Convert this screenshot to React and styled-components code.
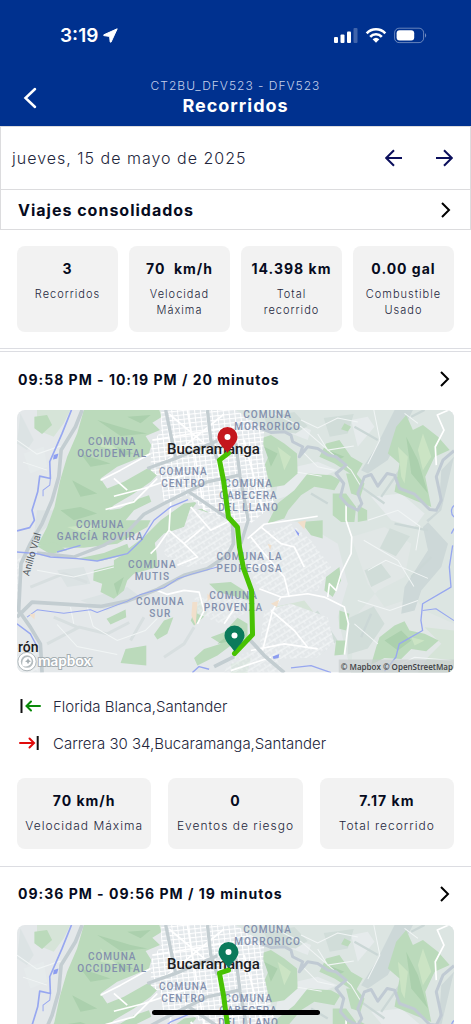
import React from "react";
import styled, { createGlobalStyle } from "styled-components";

const summary = [
  { value: "3", label: "Recorridos" },
  { value: "70\u00a0 km/h", label: "Velocidad Máxima" },
  { value: "14.398 km", label: "Total recorrido" },
  { value: "0.00 gal", label: "Combustible Usado" },
];

const trips = [
  {
    id: 1,
    title: "09:58 PM - 10:19 PM / 20 minutos",
    route: "M211 43 L202 50 L206 70 L211 107 L220 117 L222 137 L226 158 L234 180 L235 224 L217 243",
    pins: [
      { x: 210, y: 43, color: "#c4161c" },
      { x: 217, y: 241, color: "#0b7a5b" },
    ],
    from: "Florida Blanca,Santander",
    to: "Carrera 30 34,Bucaramanga,Santander",
    stats: [
      { value: "70 km/h", label: "Velocidad Máxima" },
      { value: "0", label: "Eventos de riesgo" },
      { value: "7.17 km", label: "Total recorrido" },
    ],
  },
  {
    id: 2,
    title: "09:36 PM - 09:56 PM / 19 minutos",
    route: "M211 45 L202 48 L206 70 L211 107 L220 117 L222 137 L226 158 L234 180 L235 224 L217 243",
    pins: [{ x: 211, y: 43, color: "#0b7a5b" }],
  },
];

const areas = [
  { x: 95, y: 35, lines: ["COMUNA", "OCCIDENTAL"] },
  { x: 250, y: 8, lines: ["COMUNA", "MORRORICO"] },
  { x: 166, y: 65, lines: ["COMUNA", "CENTRO"] },
  { x: 231, y: 77, lines: ["COMUNA", "CABECERA", "DEL LLANO"] },
  { x: 83, y: 118, lines: ["COMUNA", "GARCÍA ROVIRA"] },
  { x: 135, y: 158, lines: ["COMUNA", "MUTIS"] },
  { x: 232, y: 150, lines: ["COMUNA LA", "PEDREGOSA"] },
  { x: 143, y: 195, lines: ["COMUNA", "SUR"] },
  { x: 216, y: 189, lines: ["COMUNA", "PROVENZA"] },
];

function StatusIcons() {
  return (
    <svg width="94" height="18" viewBox="0 0 94 18" fill="#fff" aria-hidden="true">
      <rect x="0" y="11" width="4" height="6" rx="1" />
      <rect x="6.500" y="8.500" width="4" height="8.500" rx="1" />
      <rect x="13" y="5.500" width="4" height="11.500" rx="1" />
      <rect x="19.500" y="2" width="4" height="15" rx="1" opacity="0.25" />
      <g fill="none" stroke="#fff" strokeWidth="2.600">
        <path d="M32.700 7.300 A12.700 12.700 0 0 1 51.300 7.300" />
        <path d="M36.200 10.900 A7.800 7.800 0 0 1 47.800 10.900" />
      </g>
      <path d="M38.600 13.300 A5 5 0 0 1 45.400 13.300 L42 16.700 Z" />
      <rect x="60.600" y="2.200" width="29" height="14.400" rx="4.500" fill="none" stroke="#fff" opacity="0.4" />
      <rect x="62.600" y="4.200" width="17.600" height="10.400" rx="3" />
      <path d="M91 7 Q93.400 9.400 91 11.800 Z" opacity="0.45" />
    </svg>
  );
}

function Chevron() {
  return (
    <svg width="12" height="18" viewBox="0 0 12 18" fill="none" stroke="#000" strokeWidth="2" aria-hidden="true">
      <path d="M2 2 L9 9 L2 16" />
    </svg>
  );
}

function DayArrow({ next }) {
  return (
    <svg width="17" height="18" viewBox="0 0 17 18" fill="none" stroke="#0b0f5c" strokeWidth="2" aria-hidden="true">
      <path d={next ? "M0 9 H15.500 M8 1.200 L15.800 9 L8 16.800" : "M17 9 H1.500 M9 1.200 L1.200 9 L9 16.800"} />
    </svg>
  );
}

function StopIcon({ end }) {
  return (
    <svg width="22" height="16" viewBox="0 0 22 16" fill="none" strokeWidth="2" strokeLinecap="round" aria-hidden="true">
      {end ? (
        <>
          <path d="M1 8 H14 M10.500 3.500 L15 8 L10.500 12.500" stroke="#e00b0b" />
          <path d="M18.700 1 V15" stroke="#111" strokeLinecap="butt" />
        </>
      ) : (
        <>
          <path d="M2.500 1 V15" stroke="#111" strokeLinecap="butt" />
          <path d="M21 8 H8 M12 3.500 L7.500 8 L12 12.500" stroke="#0a8a0a" />
        </>
      )}
    </svg>
  );
}

function Terrain({ id }) {
  const grid = `grid-${id}`;
  const fine = `fine-${id}`;
  return (
    <svg width="436" height="262" viewBox="0 0 1308 786" preserveAspectRatio="none">
      <defs>
        <pattern id={grid} width="17" height="13" patternUnits="userSpaceOnUse" patternTransform="rotate(-6)">
          <rect width="17" height="13" fill="#e3e8eb" />
          <path d="M0 0 H17 M0 0 V13" stroke="#fff" strokeWidth="6" />
        </pattern>
        <pattern id={fine} width="26" height="19" patternUnits="userSpaceOnUse" patternTransform="rotate(-32)">
          <rect width="26" height="19" fill="#e4e8ea" />
          <path d="M0 3 H26 M3 0 V12 M17 10 V19" stroke="#f3f6f7" strokeWidth="3" />
        </pattern>
      </defs>
      <rect width="1308" height="786" fill="#e4e8ea" />

      {/* hills */}
      <path d="M655 0 H1308 V786 H1000 L960 620 990 520 960 400 860 340 760 320 720 180 Z" fill="#dce5e2" />
      <path d="M1000 380 L1100 350 1180 400 1160 500 1080 540 1010 620 1000 786 H1308 V640 L1220 600 1190 560 1100 590 1050 520 Z" fill="#e1e7e6" />
      <path d="M1130 0 L1185 0 1150 70 1110 150 1050 190 1030 180 1075 110 Z M1308 140 L1270 180 1262 300 1225 330 1290 400 1270 470 1210 540 1190 600 1150 610 1160 530 1230 420 1215 350 1270 300 Z" fill="#cdd8d8" />
      <path d="M790 180 L900 155 960 180 900 205 830 250 770 270 Z M1060 260 L1150 250 1220 310 1190 350 1120 330 Z M1000 30 L1050 20 1070 50 1020 110 Z M830 40 L880 60 870 90 820 70 Z M20 130 L80 110 90 170 40 190 Z" fill="#e6ebec" />
      <path d="M740 24 L830 6 870 48 834 70 756 60 Z M918 24 L1008 12 990 70 936 80 Z M990 624 L1068 588 1100 640 1050 714 990 732 Z M1116 354 L1176 378 1134 438 1086 414 Z M1040 480 L1090 460 1120 500 1060 530 Z M850 640 L900 600 960 690 900 740 Z" fill="#d1ddd9" />
      <path d="M1220 650 L1308 660 V786 H1200 L1230 740 1270 700 Z M770 590 L860 570 900 620 830 650 Z M60 0 L160 0 140 40 110 80 60 60 Z M420 0 L440 0 440 30 Z" fill="#d6e4d8" />
      <path d="M10 10 L50 90 30 120 0 100 Z M60 300 L110 300 90 350 50 380 Z M190 570 L330 530 370 560 270 600 Z M120 480 L200 470 220 520 150 530 Z" fill="#dce3e4" />
      <g fill="none" stroke="#d8dfe0" strokeWidth="9">
        <path d="M40 530 L140 490 210 516 M240 500 L310 470 M90 700 L186 650 270 670 336 636 M110 620 L180 650 M440 740 L500 700 530 650 M380 620 L340 690" />
      </g>
      <g fill="none" stroke="#cbd7d6" strokeWidth="7">
        <path d="M1160 160 L1090 260 M1030 230 L1100 280 M1180 20 L1220 0 M1130 340 L1230 360 M1240 440 L1180 500 M1060 610 L1030 680 M880 250 L930 280 M1010 50 L1080 90" />
      </g>

      {/* woods */}
      <g fill="#bbdabb">
        <path d="M200 0 L425 0 434 20 405 38 428 60 385 78 402 105 395 130 350 150 300 170 250 205 270 235 320 215 390 175 432 182 400 215 350 250 290 285 275 300 310 295 350 270 395 255 402 275 350 300 325 330 400 330 390 350 300 400 200 412 110 412 62 405 90 350 112 290 128 215 150 140 180 70 Z" />
        <path d="M52 20 L90 15 105 45 75 72 52 55 Z" />
        <path d="M320 425 L380 380 430 330 500 280 540 275 520 300 560 295 600 270 560 320 500 350 440 370 410 400 350 435 Z" />
        <path d="M230 480 L290 465 290 450 370 400 412 395 418 430 420 470 350 490 330 510 320 540 290 565 250 545 255 520 228 510 Z" />
        <path d="M730 85 L760 75 800 100 838 130 840 190 800 225 760 232 735 180 752 140 Z" />
        <path d="M925 100 L965 90 1000 140 1035 160 1012 200 950 160 905 140 Z M980 40 L1000 50 990 64 970 58 Z" />
        <path d="M1135 50 L1165 15 1185 60 1215 45 1260 80 1295 120 1250 140 1222 200 1240 290 1190 270 1130 245 1145 160 1110 130 Z" />
        <path d="M750 340 L780 280 830 240 870 190 940 195 968 210 950 240 890 230 850 255 812 300 800 325 Z" />
        <path d="M945 250 H985 L1015 290 1010 335 970 335 945 315 Z M985 190 L1015 190 1040 220 1028 260 1000 250 Z M850 335 L915 330 915 385 880 375 Z M1020 285 L1048 300 1048 330 1020 335 Z" />
        <path d="M530 742 L560 715 610 700 580 680 620 665 660 622 690 640 690 680 640 705 600 735 540 765 Z" />
        <path d="M575 520 L640 515 680 540 708 575 660 560 600 545 Z M520 630 L550 560 570 610 530 645 Z M800 450 L815 480 795 545 785 530 800 490 Z M725 450 L740 490 730 520 718 500 Z" />
        <path d="M965 600 L995 610 985 660 965 655 Z M955 690 L985 690 980 732 950 735 Z M925 500 L965 470 970 510 945 560 920 540 Z" />
        <path d="M1085 680 L1130 645 1160 632 1175 660 1220 670 1262 690 1225 722 1180 715 1150 745 1100 742 1060 762 1075 710 Z" />
        <path d="M268 625 L325 597 327 620 280 642 Z M325 715 L387 705 387 765 310 757 Z M410 672 L440 630 468 620 450 670 420 687 Z" />
        <path d="M60 408 L110 395 150 420 100 432 Z M180 445 L260 428 330 400 340 430 250 452 Z M640 760 L700 740 690 786 640 786 Z" />
      </g>
      <g fill="#abd0ad">
        <path d="M240 30 L340 60 390 70 310 78 Z M190 130 L280 160 220 170 Z M165 210 L240 250 190 260 Z M130 300 L190 290 240 310 170 330 Z M300 110 L350 130 310 140 Z M330 20 L400 15 370 40 Z" />
        <path d="M1165 80 L1200 150 1230 250 1180 190 Z M290 520 L320 500 300 555 Z M1100 690 L1150 660 1180 690 1140 720 Z M740 110 L780 130 760 170 Z M930 120 L980 140 960 150 Z M600 700 L660 650 650 690 Z" />
      </g>
      <path d="M1215 70 L1240 140 1215 180 1200 120 Z M250 70 L300 120 250 110 Z M780 110 L820 140 800 180 Z M1140 110 L1170 140 1160 220 1150 200 Z M150 350 L260 340 200 370 Z M1180 680 L1220 690 1190 705 Z" fill="#cbe4c4" />

      {/* street blocks */}
      <path d="M430 0 H655 L700 30 740 60 735 130 750 200 770 280 700 340 640 335 560 300 510 255 440 282 430 205 400 180 402 105 432 60 Z" fill={`url(#${grid})`} />
      <path d="M520 290 L640 330 655 400 600 450 520 470 480 465 440 430 450 370 500 350 Z M700 380 L820 340 880 390 940 470 900 540 800 555 720 530 690 470 Z M740 600 L820 580 930 620 950 700 900 740 720 750 Z" fill={`url(#${fine})`} />
      <path d="M0 700 L60 720 70 786 H0 Z M530 560 L690 570 680 610 610 640 540 610 Z M640 745 L750 700 800 786 H620 Z M0 440 L12 440 8 560 0 580 Z" fill={`url(#${fine})`} opacity="0.800" />
      <g fill="none" stroke="#fff" strokeWidth="5" strokeLinejoin="round">
        <path d="M455 12 L620 150 M450 150 L620 12 M510 0 L560 300 M405 90 L650 50 M680 90 L735 300 M620 230 L640 330" />
        <path d="M460 275 L455 360 500 400 540 440 480 465 M455 360 L420 410 400 430 M520 290 L580 360 640 330 M500 400 L560 350" />
        <path d="M500 195 L380 235 290 258 M420 205 L350 275 265 298 M400 130 L310 180 250 210 M290 205 L330 240" />
        <path d="M1292 0 L1258 15 1278 60 1252 110 1255 165" />
        <path d="M985 285 L985 330 1002 380 1000 430 970 490 955 540 935 520 930 560 M790 560 L870 550 920 560 980 590 992 640 980 732 M725 535 L790 560 M690 385 L740 342 820 330 900 318" />
        <path d="M790 560 L765 600 750 660 735 720 M700 380 L740 430 800 500 815 560 M730 350 L790 400 830 410 860 470 M760 600 L830 660 870 710 M700 720 L800 700 900 715" />
        <path d="M420 540 L450 552 500 540 545 545 560 600 540 640 M660 580 L620 640 M680 470 L760 460 M640 780 L760 740" />
      </g>
      <g fill="none" stroke="#f1f5f5" strokeWidth="3">
        <path d="M0 90 L60 132 130 108 M18 156 L90 180 M60 480 L170 500 290 470 M210 588 L228 648 300 690 384 660 420 624 M120 642 L180 708 300 732 M160 590 L170 640" />
        <path d="M850 30 L900 54 960 24 1020 36 M900 72 L930 120 1008 108 M1068 0 L1086 90 1050 162 M840 186 L912 198 M1050 330 L1140 300 1206 348 1194 420 M1038 390 L1140 450 1188 528 M1020 570 L1116 600 1200 570 M1050 480 L1104 450 1230 504 M770 10 L850 50 1000 180 1030 230 M1160 10 L1200 40 M1010 640 L1080 700 M1130 770 L1190 740 1300 750 M860 130 L900 170 950 180" />
      </g>

      {/* highways */}
      <g fill="none" stroke="#c3cdd1" strokeWidth="11" strokeLinejoin="round">
        <path d="M195 0 L175 50 132 120 125 200 105 270 75 340 40 400 12 460 5 600 40 650 70 700 75 786" />
        <path d="M0 620 L45 575 250 588 330 572 420 537 500 495 570 475 630 435 648 400 645 340" />
        <path d="M60 428 L170 440 260 405 330 365 380 312 440 280 510 245 570 215 665 195" strokeWidth="10" />
        <path d="M445 0 L475 145 M570 0 L580 90 600 150 M655 100 L668 200 692 330 670 400 M390 175 L475 145 600 92 M510 242 L640 330" strokeWidth="10" />
        <path d="M690 680 L740 735 800 786 M590 768 L650 738" />
        <path d="M730 55 L760 67 800 65 820 75 825 95 855 110 845 140 870 110 900 115 930 135 955 140 985 165 955 190 978 220 968 260 990 285 1020 300 1032 280 1020 250 1040 200 1060 193 1080 228 1108 190 1130 195 1145 235 1190 252 1235 298 1255 300 1270 270 1255 200 1275 150 1308 122" stroke="#c0cad3" strokeWidth="9" />
      </g>

      {/* rivers */}
      <g fill="none" stroke="#97a7f0" strokeWidth="4" strokeLinejoin="round">
        <path d="M163 0 L135 70 98 155 100 205 68 198 62 245 45 300 52 330 38 352 0 362" strokeWidth="5" />
        <path d="M100 205 L98 225 78 240 78 258" strokeWidth="3" />
        <path d="M0 425 L60 430 100 440 180 445 240 452 330 430 372 390 410 330 460 290 512 268 M120 425 L190 405" />
        <path d="M30 620 L60 598 140 608 220 598 240 606 330 572 370 552 440 532 480 506 520 492 600 470" strokeWidth="3" />
        <path d="M0 640 L40 670 62 712" />
        <path d="M1304 405 L1294 470 1299 530 1214 580 1209 630 1214 660 1144 700 1134 740 1100 782" />
        <path d="M1214 600 L1254 595 1308 630" strokeWidth="3" />
        <path d="M525 786 L545 768 575 776 M820 772 L880 765 940 786 M1308 286 A16 20 0 0 0 1308 320 M1300 370 L1308 355" />
      </g>
      <path d="M110 135 L124 130 120 145 108 148 Z M765 738 L785 730 783 742 768 745 Z M830 355 L845 370 842 378 Z" fill="#8c9df0" />
      <path d="M840 335 L865 330 860 358 Z M760 580 L785 568 778 590 Z M525 575 L540 575 535 645 522 615 Z M570 550 L582 560 570 575 Z M36 612 L54 608 52 626 Z M750 400 L762 405 758 418 Z" fill="#f1dfcb" />
    </svg>
  );
}

function TripMap({ id, route, pins }) {
  return (
    <MapFrame viewBox="0 0 436 262" preserveAspectRatio="xMidYMid slice" role="img" aria-label="Mapa del recorrido">
      <Terrain id={id} />
      {areas.map(({ x, y, lines }) => (
        <AreaName key={lines.join()}>
          {lines.map((line, index) => (
            <text key={line} x={x} y={y + index * 12}>
              {line}
            </text>
          ))}
        </AreaName>
      ))}
      <RoadName transform="translate(12 166) rotate(-74)">Anillo Vial</RoadName>
      <CityName x="196" y="44">Bucaramanga</CityName>
      <TownName x="1" y="241">rón</TownName>

      <path d={route} fill="none" stroke="#48c203" strokeWidth="5" strokeLinejoin="round" strokeLinecap="round" />
      {pins.map(({ x, y, color }) => (
        <g key={y} transform={`translate(${x} ${y})`}>
          <path d="M0 0 C-3 -5 -10 -10 -10 -16 A10 10 0 0 1 10 -16 C10 -10 3 -5 0 0 Z" fill={color} />
          <circle cy="-16" r="3" fill="#fff" />
        </g>
      ))}

      <circle cx="10" cy="251" r="7.500" fill="#b4bcbf" stroke="#fff" strokeWidth="2.500" />
      <circle cx="10" cy="251" r="9.200" fill="none" stroke="#a5aeb2" strokeWidth="0.800" />
      <path d="M5.500 255.500 C4 248 9 245 13 247 C17 251 13 257.500 5.500 255.500 Z" fill="#fff" />
      <path d="M11 247.800 L12 249.800 L14 250.700 L12 251.600 L11 253.600 L10 251.600 L8 250.700 L10 249.800 Z" fill="#a5aeb2" />
      <LogoName x="21" y="255">mapbox</LogoName>
      <rect x="321" y="249" width="115" height="13" fill="#c9cfcf" opacity="0.700" />
      <Credit x="435" y="259">© Mapbox © OpenStreetMap</Credit>
    </MapFrame>
  );
}

function Stats({ items, wide }) {
  return (
    <StatGrid $columns={items.length} $wide={wide}>
      {items.map(({ value, label }) => (
        <Stat key={label} $wide={wide}>
          <dd>{value}</dd>
          <dt>{label}</dt>
        </Stat>
      ))}
    </StatGrid>
  );
}

function App() {
  return (
    <Screen>
      <GlobalStyle />
      <Header>
        <StatusBar>
          <Clock>
            3:19
            <svg width="15" height="15" viewBox="0 0 15 15" fill="#fff" stroke="#fff" strokeLinejoin="round" aria-hidden="true">
              <path d="M14.200 0.800 L8 14.200 L7.200 14 L6.600 8.400 L0.800 7.600 L0.800 6.800 Z" />
            </svg>
          </Clock>
          <StatusIcons />
        </StatusBar>
        <TitleBar>
          <BackButton aria-label="Volver">
            <svg width="14" height="22" viewBox="0 0 14 22" fill="none" stroke="#fff" strokeWidth="2.500" strokeLinecap="round" aria-hidden="true">
              <path d="M12 2 L2.500 11 L12 20" />
            </svg>
          </BackButton>
          <Titles>
            <p>CT2BU_DFV523 - DFV523</p>
            <h1>Recorridos</h1>
          </Titles>
        </TitleBar>
      </Header>
      <DateBar>
        <span>jueves, 15 de mayo de 2025</span>
        <nav>
          <IconButton aria-label="Día anterior">
            <DayArrow />
          </IconButton>
          <IconButton aria-label="Día siguiente">
            <DayArrow next />
          </IconButton>
        </nav>
      </DateBar>
      <Consolidated>
        Viajes consolidados
        <Chevron />
      </Consolidated>
      <Content>
        <Summary>
          <Stats items={summary} />
        </Summary>
        {trips.map((trip) => (
          <Trip key={trip.id}>
            <TripButton>
              {trip.title}
              <Chevron />
            </TripButton>
            <TripMap id={trip.id} route={trip.route} pins={trip.pins} />
            {trip.stats && (
              <>
                <Stops>
                  <li>
                    <StopIcon />
                    {trip.from}
                  </li>
                  <li>
                    <StopIcon end />
                    {trip.to}
                  </li>
                </Stops>
                <Stats items={trip.stats} wide />
              </>
            )}
          </Trip>
        ))}
      </Content>
      <HomeIndicator />
    </Screen>
  );
}

export default App;

const GlobalStyle = createGlobalStyle`
  * {
    box-sizing: border-box;
  }
  body {
    margin: 0;
    background: #fff;
    color: #060b20;
    font-family: Inter, "Liberation Sans", sans-serif;
  }
  h1, p, ul, dl, dd {
    margin: 0;
    padding: 0;
  }
  button {
    border: 0;
    padding: 0;
    background: none;
    color: inherit;
    font: inherit;
    cursor: pointer;
  }
  svg {
    display: block;
    flex: none;
  }
`;
const Screen = styled.div`
  height: 100vh;
  display: flex;
  flex-direction: column;
  position: relative;
  overflow: hidden;
`;
const Header = styled.header`
  background: #00318f;
  color: #fff;
  flex: none;
`;
const StatusBar = styled.div`
  height: 70px;
  display: flex;
  align-items: center;
  justify-content: space-between;
  padding: 0 43px 0 60px;
`;
const Clock = styled.span`
  display: flex;
  align-items: center;
  gap: 5px;
  font-size: 19px;
  font-weight: 600;
`;
const TitleBar = styled.div`
  height: 56px;
  display: grid;
  grid-template-columns: 40px 1fr 40px;
  align-items: center;
  padding: 0 10px;
`;
const BackButton = styled.button`
  height: 40px;
  display: grid;
  place-items: center;
`;
const Titles = styled.div`
  text-align: center;
  p {
    font-size: 12px;
    line-height: 16px;
    font-weight: 300;
    letter-spacing: 1px;
    color: #c3cfea;
  }
  h1 {
    font-size: 18px;
    line-height: 24px;
    font-weight: 700;
    letter-spacing: 1px;
  }
`;
const DateBar = styled.div`
  flex: none;
  height: 64px;
  display: flex;
  align-items: center;
  justify-content: space-between;
  padding: 0 17px 0 11px;
  border: 1px solid #dcdcde;
  font-size: 16px;
  font-weight: 300;
  letter-spacing: 1px;
  color: #23263c;
  nav {
    display: flex;
    gap: 34px;
  }
`;
const IconButton = styled.button`
  display: block;
`;
const Consolidated = styled.button`
  && {
    flex: none;
    height: 40px;
    display: flex;
    align-items: center;
    justify-content: space-between;
    padding: 0 18px 0 17px;
    border: 1px solid #dcdcde;
    border-top: 0;
    font-size: 16px;
    font-weight: 700;
    letter-spacing: 1px;
  }
`;
const Content = styled.main`
  flex: 1;
  min-height: 0;
  overflow-y: auto;
  scrollbar-width: none;
`;
const Summary = styled.section`
  padding: 16px 17px;
  margin-bottom: 2px;
  border-bottom: 1px solid #dcdde2;
`;
const StatGrid = styled.dl`
  display: grid;
  grid-template-columns: repeat(${({ $columns }) => $columns}, 1fr);
  gap: ${({ $wide }) => ($wide ? "17px" : "11px")};
`;
const Stat = styled.div`
  min-height: ${({ $wide }) => ($wide ? "71px" : "86px")};
  display: flex;
  flex-direction: column;
  gap: 7px;
  padding-top: 13px;
  border-radius: 8px;
  background: #f2f2f2;
  text-align: center;
  letter-spacing: 1px;
  dd {
    font-size: 14px;
    line-height: 20px;
    font-weight: 700;
    white-space: nowrap;
  }
  dt {
    padding: 0 ${({ $wide }) => ($wide ? "4px" : "10px")};
    font-size: ${({ $wide }) => ($wide ? "12px" : "11px")};
    line-height: 16px;
    font-weight: 300;
    color: #23263c;
  }
`;
const Trip = styled.section`
  padding: 0 17px 17px;
  border-top: 1px solid #dcdde2;
`;
const TripButton = styled.button`
  && {
    width: 100%;
    height: 54px;
    margin-bottom: 4px;
    display: flex;
    align-items: center;
    justify-content: space-between;
    padding: 0 3px 0 1px;
    font-size: 14px;
    font-weight: 700;
    letter-spacing: 1px;
  }
`;
const MapFrame = styled.svg`
  width: 100%;
  aspect-ratio: 436 / 262;
  border-radius: 8px;
  overflow: hidden;
  font-family: Roboto, sans-serif;
`;
const AreaName = styled.g`
  fill: #8390ad;
  font-size: 10px;
  font-weight: 500;
  letter-spacing: 1px;
  text-anchor: middle;
`;
const CityName = styled.text`
  fill: #1c1c1e;
  font-size: 15px;
  font-weight: 500;
  text-anchor: middle;
`;
const TownName = styled.text`
  fill: #1c1c1e;
  font-size: 14px;
  font-weight: 500;
`;
const RoadName = styled.text`
  fill: #50575c;
  font-size: 10px;
`;
const LogoName = styled.text`
  fill: #fff;
  stroke: #a5aeb2;
  stroke-width: 2px;
  paint-order: stroke;
  font-family: Lato, sans-serif;
  font-size: 15px;
  font-weight: 700;
`;
const Credit = styled.text`
  fill: #3c4043;
  font-family: "Open Sans", sans-serif;
  font-size: 8px;
  font-weight: 600;
  text-anchor: end;
`;
const Stops = styled.ul`
  list-style: none;
  && {
    padding: 15px 0 16px;
  }
  li {
    height: 37px;
    display: flex;
    align-items: center;
    gap: 12px;
    padding-left: 2px;
    font-size: 15px;
    font-weight: 300;
    color: #23263c;
  }
`;
const HomeIndicator = styled.div`
  position: absolute;
  bottom: 9px;
  left: 50%;
  width: 168px;
  height: 5px;
  margin-left: -84px;
  border-radius: 3px;
  background: #000;
`;
